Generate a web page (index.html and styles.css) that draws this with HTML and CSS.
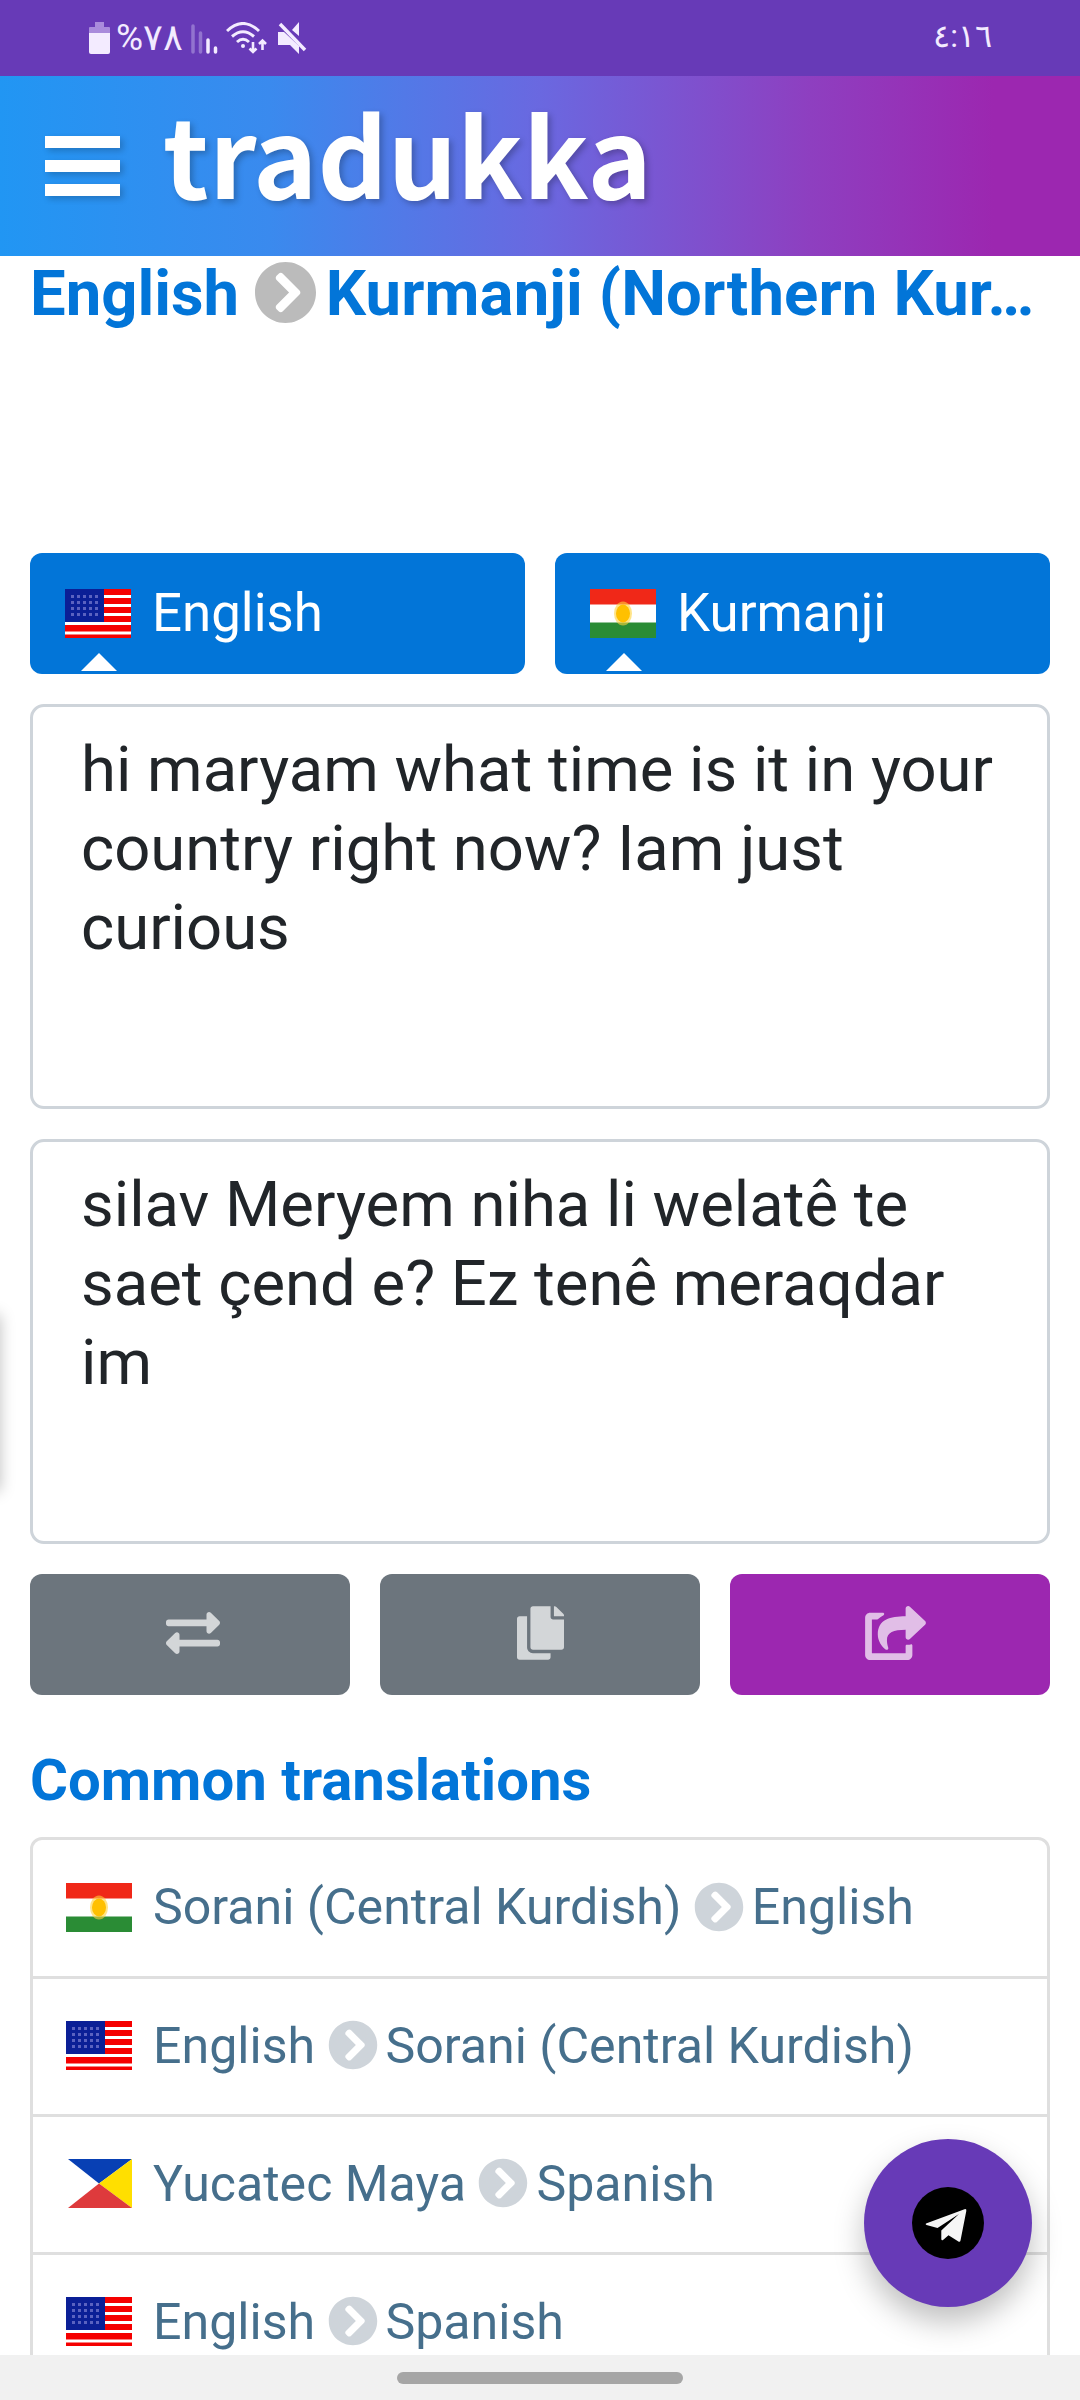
FILE: index.html
```html
<!DOCTYPE html>
<html lang="en">
<head>
    <meta charset="UTF-8">
    <meta name="viewport" content="width=device-width, initial-scale=1.0">
    <title>tradukka</title>
    <link rel="stylesheet" href="styles.css">
</head>
<body>
    <svg class="defs" width="0" height="0">
        <symbol id="chevron" viewBox="0 0 512 512">
            <path d="M256 8c137 0 248 111 248 248S393 504 256 504 8 393 8 256 119 8 256 8zm113.9 231L234.4 103.5c-9.4-9.4-24.6-9.4-33.9 0l-17 17c-9.4 9.4-9.4 24.6 0 33.9L285.1 256 183.5 357.6c-9.4 9.4-9.4 24.6 0 33.9l17 17c9.4 9.4 24.6 9.4 33.9 0L369.9 273c9.4-9.4 9.4-24.6 0-34z"/>
        </symbol>
        <pattern id="stars" x="6" y="6" width="6" height="6" patternUnits="userSpaceOnUse">
            <rect x="0" y="0" width="3" height="3" fill="#5a62c0"/>
        </pattern>
        <symbol id="flag-us" viewBox="0 0 66 49" preserveAspectRatio="none">
            <rect width="66" height="49" fill="#fff"/>
            <path d="M0 0h66v6H0zM0 9h66v6H0zM0 18h66v6H0zM0 27h66v6H0zM0 36h66v6.500H0zM0 45.500h66v3.500H0z" fill="#f50000"/>
            <rect width="39" height="33" fill="#0b1f96"/>
            <rect x="6" y="6" width="28" height="22" fill="url(#stars)"/>
        </symbol>
        <symbol id="flag-ku" viewBox="0 0 66 49" preserveAspectRatio="none">
            <rect width="66" height="49" fill="#fff"/>
            <rect width="66" height="15.5" fill="#f02818"/>
            <rect y="33.5" width="66" height="15.5" fill="#2a8c35"/>
            <ellipse cx="33" cy="24.5" rx="9" ry="12" fill="#ffd23a" opacity=".6"/>
            <ellipse cx="33" cy="24.5" rx="7" ry="9" fill="#ffc000"/>
        </symbol>
        <symbol id="flag-maya" viewBox="0 0 66 49" preserveAspectRatio="none">
            <path d="M2 0h64L33 24.5z" fill="#0840b4"/>
            <path d="M66 0v49L33 24.5z" fill="#ffdf00"/>
            <path d="M2 49h64L33 24.5z" fill="#de3a3c"/>
        </symbol>
    </svg>

    <div class="status-bar">
        <div class="status-left">
            <svg class="battery" width="21" height="32" viewBox="0 0 21 32">
                <path d="M6 0h9v5h5a1 1 0 0 1 1 1v5H0V6a1 1 0 0 1 1-1h5z" fill="#a98bdc"/>
                <path d="M0 11h21v19a2 2 0 0 1-2 2H2a2 2 0 0 1-2-2z" fill="#f3ebff"/>
            </svg>
            <span class="percent">%٧٨</span>
            <svg class="signal" width="27" height="30" viewBox="0 0 27 30">
                <path d="M2 2v26M9.500 9v19" stroke="#9273cf" stroke-width="3.500" stroke-linecap="round"/>
                <path d="M17 16v12M24.500 24v4" stroke="#f3ebff" stroke-width="3.500" stroke-linecap="round"/>
            </svg>
            <svg class="wifi" width="41" height="32" viewBox="0 0 41 32" fill="none" stroke="#f3ebff" stroke-width="3">
                <path d="M1 9Q17-6 33 9M6 14.500Q17 5 28 14.500M11 20Q17 14.500 23 20"/>
                <circle cx="17" cy="24" r="2" fill="#f3ebff" stroke="none"/>
                <path d="M27 20v10M23.500 26.500l3.500 3.500 3.500-3.500M36.500 28V18.500M33 22l3.500-3.500 3.500 3.500" stroke-width="2.600"/>
            </svg>
            <svg class="mute" width="29" height="32" viewBox="0 0 29 32" fill="#f3ebff">
                <path d="M0 10h6l15 14v8l-9-9H0zM14 8l7-8v14z"/>
                <path d="M2 2l25 26" stroke="#f3ebff" stroke-width="3.500"/>
            </svg>
        </div>
        <span class="clock">٤:١٦</span>
    </div>

    <header class="header">
        <div class="menu"><span></span><span></span><span></span></div>
        <div class="logo">tradukka</div>
    </header>

    <main class="container">
        <h1 class="title">English <svg class="chevron"><use href="#chevron"/></svg><span class="target">Kurmanji (Northern Kur…</span></h1>

        <div class="languages">
            <button class="lang"><svg class="flag"><use href="#flag-us"/></svg>English</button>
            <button class="lang"><svg class="flag"><use href="#flag-ku"/></svg>Kurmanji</button>
        </div>

        <div class="box">hi maryam what time is it in your country right now? Iam just curious</div>
        <div class="box">silav Meryem niha li welatê te saet çend e? Ez tenê meraqdar im</div>

        <div class="actions">
            <button class="action swap">
                <svg width="54" height="54" viewBox="0 0 512 512"><path d="M0 168v-16c0-13.255 10.745-24 24-24h360V80c0-21.367 25.899-32.042 40.971-16.971l80 80c9.372 9.373 9.372 24.569 0 33.941l-80 80C409.956 271.982 384 261.456 384 240v-48H24c-13.255 0-24-10.745-24-24zm488 152H128v-48c0-21.314-25.862-32.08-40.971-16.971l-80 80c-9.372 9.373-9.372 24.569 0 33.941l80 80C102.057 463.997 128 453.437 128 432v-48h360c13.255 0 24-10.745 24-24v-16c0-13.255-10.745-24-24-24z"/></svg>
            </button>
            <button class="action">
                <svg width="47" height="54" viewBox="0 0 448 512"><path d="M320 448v40c0 13.255-10.745 24-24 24H24c-13.255 0-24-10.745-24-24V120c0-13.255 10.745-24 24-24h72v296c0 30.879 25.121 56 56 56h168zm0-344V0H152c-13.255 0-24 10.745-24 24v368c0 13.255 10.745 24 24 24h272c13.255 0 24-10.745 24-24V128H344c-13.2 0-24-10.800-24-24zm120.971-31.029L375.029 7.029A24 24 0 0 0 358.059 0H352v96h96v-6.059a24 24 0 0 0-7.029-16.970z"/></svg>
            </button>
            <button class="action share">
                <svg width="61" height="54" viewBox="0 0 576 512"><path d="M568.482 177.448L424.479 313.433C409.300 327.768 384 317.140 384 295.985v-71.963c-144.575.970-205.566 35.113-164.775 171.353 4.483 14.973-12.846 26.567-25.006 17.330C155.252 383.105 120 326.488 120 269.339c0-143.937 117.599-172.500 264-173.312V24.012c0-21.174 25.317-31.768 40.479-17.448l144.003 135.988c10.020 9.463 10.028 25.425 0 34.896zM384 379.128V448H64V128h50.916a11.990 11.990 0 0 0 8.648-3.693c14.953-15.568 32.237-27.890 51.014-37.676C185.708 80.830 181.584 64 169.033 64H48C21.490 64 0 85.490 0 112v352c0 26.510 21.490 48 48 48h352c26.510 0 48-21.490 48-48v-88.806c0-8.288-8.197-14.066-16.011-11.302a71.830 71.830 0 0 1-34.189 3.377c-7.270-1.046-13.800 4.514-13.800 11.859z"/></svg>
            </button>
        </div>

        <h2 class="subtitle">Common translations</h2>
        <ul class="list">
            <li><svg class="flag"><use href="#flag-ku"/></svg>Sorani (Central Kurdish) <svg class="chevron"><use href="#chevron"/></svg>English</li>
            <li><svg class="flag"><use href="#flag-us"/></svg>English <svg class="chevron"><use href="#chevron"/></svg>Sorani (Central Kurdish)</li>
            <li><svg class="flag"><use href="#flag-maya"/></svg>Yucatec Maya <svg class="chevron"><use href="#chevron"/></svg>Spanish</li>
            <li><svg class="flag"><use href="#flag-us"/></svg>English <svg class="chevron"><use href="#chevron"/></svg>Spanish</li>
        </ul>
    </main>

    <div class="edge-panel"></div>

    <div class="fab">
        <svg width="72" height="72" viewBox="0 0 72 72">
            <circle cx="36" cy="36" r="36" fill="#000"/>
            <path d="M14 36.500L52.500 22.200Q54.800 21.600 54.300 24L48.500 53.500Q48 55.600 46 54.200L36.500 48.200 31 53Q29.500 54 29.300 52V43.500L47 27 25.500 41 14.500 38Q13 37.200 14 36.500z" fill="#f6f6f6"/>
        </svg>
    </div>

    <div class="nav-bar"><span class="handle"></span></div>
</body>
</html>
```
FILE: styles.css
```css
* { box-sizing: border-box; }
body { margin: 0; height: 2400px; overflow: hidden; background: #fff; font-family: Roboto, sans-serif; color: #212529; display: flex; flex-direction: column; }
button { border: none; font-family: inherit; }
.defs { position: absolute; }

.status-bar { height: 76px; flex: none; padding: 0 88px 0 89px; background: #673ab7; display: flex; justify-content: space-between; color: #f3ebff; }
.status-left { display: flex; align-items: flex-start; padding-top: 22px; }
.percent { width: 63px; margin-left: 6px; font-size: 37px; line-height: 32px; letter-spacing: -3px; direction: ltr; white-space: nowrap; unicode-bidi: bidi-override; }
.signal { margin: 2px 0 0 12px; }
.wifi { margin-left: 8px; }
.mute { margin-left: 11px; }
.clock { font-size: 32px; line-height: 73px; letter-spacing: -4px; direction: ltr; unicode-bidi: bidi-override; }

.header { height: 180px; flex: none; padding: 0 45px; display: flex; background: linear-gradient(90deg, #2196f3 0%, #3a8aee 25%, #6a68e0 50%, #8e3fc0 75%, #9c27b0 92%); }
.menu { width: 75px; padding-top: 60px; display: flex; flex-direction: column; gap: 12px; }
.menu span { height: 12px; background: #fff; box-shadow: 3px 3px 6px rgba(0, 0, 0, 0.2); }
.logo { margin-left: 43px; font-family: "Noto Sans CJK SC", sans-serif; font-weight: bold; font-size: 109px; line-height: 152px; color: #fff; text-shadow: 3px 3px 6px rgba(0, 0, 0, 0.25); }

.container { flex: 1; min-height: 0; padding: 0 30px; overflow: hidden; }
.chevron { fill: #ced4da; }
.title { margin: 0 0 224px; height: 73px; display: flex; align-items: center; font-size: 63.4px; line-height: 74px; font-weight: bold; color: #0275d8; white-space: pre; }
.title .chevron { width: 63px; height: 63px; flex: none; margin: -1px 9px 0 -1px; fill: #bbb; }
.target { flex: 1; letter-spacing: 0.15px; }

.languages { display: grid; grid-template-columns: 1fr 1fr; gap: 30px; margin-bottom: 30px; }
.lang { position: relative; height: 121px; padding: 0 35px 1px; display: flex; align-items: center; font-size: 52.8px; color: #fff; background: #0275d8; border-radius: 12px; }
.lang::after { content: ""; position: absolute; left: 51px; bottom: 3px; border: 18px solid transparent; border-top: 0; border-bottom-color: #fff; }
.flag { width: 66px; height: 49px; flex: none; margin-right: 21px; }

.box { height: 405px; margin-bottom: 30px; padding: 23px 48px; border: 3px solid #ced4da; border-radius: 14px; font-size: 63.4px; line-height: 79px; }

.actions { display: grid; grid-template-columns: repeat(3, 1fr); gap: 30px; }
.action { height: 121px; padding: 0 0 3px; display: flex; align-items: center; justify-content: center; background: #6c757d; border-radius: 12px; }
.action svg { fill: #fff; opacity: 0.7; }
.swap { padding-left: 5px; }
.share { padding-left: 11px; background: #9c27b0; }

.subtitle { margin: 51px 0 23px; font-size: 58.1px; line-height: 68px; font-weight: bold; color: #0275d8; }
.list { margin: 0; padding: 0; list-style: none; border: 3px solid #dfdfdf; border-radius: 12px; }
.list li { height: 138px; padding: 0 33px 2px; display: flex; align-items: center; font-size: 50.1px; color: #466f8c; white-space: pre; border-bottom: 3px solid #dfdfdf; }
.list li:first-child { height: 139px; }
.list .chevron { width: 50px; height: 50px; flex: none; margin: -1px 8px 0 0; }

/* slide-out panel hidden past the left edge, only its shadow shows */
.edge-panel { position: absolute; left: -20px; top: 1312px; width: 20px; height: 176px; box-shadow: 0 3px 15px rgba(0, 0, 0, 0.25); }

.fab { position: absolute; left: 864px; top: 2139px; width: 168px; height: 168px; border-radius: 50%; background: #673ab7; display: flex; align-items: center; justify-content: center; box-shadow: 0 15px 30px rgba(0, 0, 0, 0.25); }

.nav-bar { position: relative; height: 45px; flex: none; background: #f1f1f1; display: flex; align-items: center; justify-content: center; }
.handle { width: 286px; height: 12px; border-radius: 6px; background: #a6a6a6; }
```
